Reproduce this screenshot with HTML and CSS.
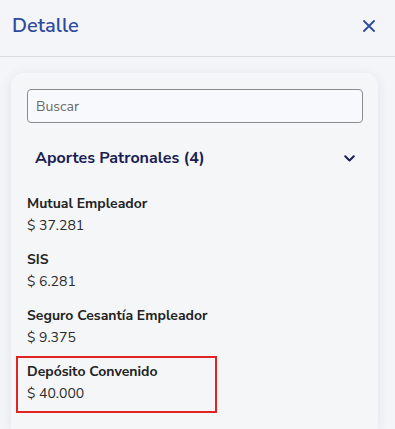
FILE: index.html
```html
<!DOCTYPE html>
<html lang="es">
<head>
    <meta charset="UTF-8">
    <meta name="viewport" content="width=device-width, initial-scale=1.0">
    <title>Detalle</title>
    <link rel="stylesheet" href="styles.css">
</head>
<body>
    <!-- Cabecera -->
    <header class="panel-header">
        <h1 class="panel-title">Detalle</h1>
        <button class="close-button" aria-label="Cerrar">
            <svg width="12" height="12" viewBox="0 0 12 12">
                <path d="M1 1 L11 11 M11 1 L1 11" stroke="#2e4a9e" stroke-width="1.8" stroke-linecap="round"/>
            </svg>
        </button>
    </header>

    <!-- Tarjeta de detalle -->
    <div class="detail-card">
        <input class="search-input" type="text" placeholder="Buscar">

        <div class="section-header">
            <span class="section-title">Aportes Patronales (4)</span>
            <svg class="chevron" width="11" height="7" viewBox="0 0 11 7">
                <path d="M1.2 1.2 L5.5 5.5 L9.8 1.2" fill="none" stroke="#1a2152" stroke-width="2" stroke-linecap="round" stroke-linejoin="round"/>
            </svg>
        </div>

        <div class="item-list">
            <div class="item">
                <div class="item-name">Mutual Empleador</div>
                <div class="item-value">$ 37.281</div>
            </div>
            <div class="item">
                <div class="item-name">SIS</div>
                <div class="item-value">$ 6.281</div>
            </div>
            <div class="item">
                <div class="item-name">Seguro Cesantía Empleador</div>
                <div class="item-value">$ 9.375</div>
            </div>
            <div class="item highlight">
                <div class="item-name">Depósito Convenido</div>
                <div class="item-value">$ 40.000</div>
            </div>
        </div>
    </div>
</body>
</html>
```

FILE: styles.css
```css
/* Global */
body, html {
    margin: 0;
    padding: 0;
    width: 100%;
    height: 100%;
    overflow: hidden;
    font-family: "Nunito Sans", Lato, "Noto Sans", sans-serif;
    background-color: #f4f5f8;
    color: #222;
}

/* Cabecera */
.panel-header {
    height: 51px;
    border-bottom: 1px solid #d9dbe1;
    display: flex;
    align-items: center;
    justify-content: space-between;
    padding: 0 20px 5px 12px;
}

.panel-title {
    margin: 0;
    font-size: 20px;
    font-weight: 600;
    color: #2e4a9e;
}

.close-button {
    background: none;
    border: none;
    padding: 0;
    width: 12px;
    height: 12px;
    display: flex;
    align-items: center;
    justify-content: center;
    cursor: pointer;
}

/* Tarjeta */
.detail-card {
    margin: 16px 0 0 11px;
    width: 367px;
    height: 356px;
    box-sizing: border-box;
    padding: 16px 15px 0 16px;
    background-color: #f5f6f8;
    border-radius: 12px 12px 0 0;
    box-shadow: 0 2px 12px rgba(0, 0, 0, 0.08);
}

.search-input {
    display: block;
    width: 100%;
    height: 34px;
    box-sizing: border-box;
    border: 1px solid #8c8c8c;
    border-radius: 4px;
    background-color: #f8f9fd;
    padding: 0 8px;
    font-family: inherit;
    font-size: 14px;
    color: #333;
}

.search-input::placeholder {
    color: #6b6b6b;
}

.section-header {
    display: flex;
    align-items: center;
    justify-content: space-between;
    padding: 24px 8px 24px 8px;
}

.section-title {
    font-size: 16px;
    line-height: 22px;
    font-weight: 700;
    color: #1a2152;
}

.item-list {
    display: flex;
    flex-direction: column;
    gap: 12px;
}

.item {
    font-size: 14px;
    line-height: 22px;
}

.item-name {
    font-weight: 700;
    color: #222;
}

.item-value {
    color: #2b2b2b;
}

/* Marca roja */
.item.highlight {
    position: relative;
}

.item.highlight::after {
    content: "";
    position: absolute;
    left: -11px;
    top: -5px;
    width: 201px;
    height: 57px;
    box-sizing: border-box;
    border: 2px solid #e02424;
}
```
